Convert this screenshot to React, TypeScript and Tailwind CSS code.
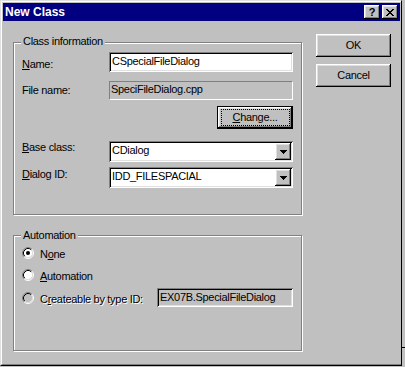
import React from "react";

const FONT = { fontFamily: '"Liberation Sans", Arial, sans-serif' };

function U({ children }: { children: React.ReactNode }) {
  return <span className="underline decoration-1 underline-offset-[1px]">{children}</span>;
}

function Label({ children, className = "" }: { children: React.ReactNode; className?: string }) {
  return (
    <div className={"text-[11px] leading-[13px] tracking-[-0.3px] text-black whitespace-nowrap " + className}>
      {children}
    </div>
  );
}

function Raised({ className = "", children }: { className?: string; children?: React.ReactNode }) {
  return (
    <div
      className={
        "bg-[#c0c0c0] shadow-[inset_-1px_-1px_0_#000,inset_1px_1px_0_#fff,inset_-2px_-2px_0_#808080,inset_2px_2px_0_#dfdfdf] " +
        className
      }
    >
      {children}
    </div>
  );
}

function Arrow() {
  return (
    <svg width="7" height="4" viewBox="0 0 7 4" shapeRendering="crispEdges">
      <rect x="0" y="0" width="7" height="1" fill="#000" />
      <rect x="1" y="1" width="5" height="1" fill="#000" />
      <rect x="2" y="2" width="3" height="1" fill="#000" />
      <rect x="3" y="3" width="1" height="1" fill="#000" />
    </svg>
  );
}

function CloseGlyph() {
  const rows = ["11000011", "01100110", "00111100", "00011000", "00111100", "01100110", "11000011"];
  return (
    <svg width="8" height="7" viewBox="0 0 8 7" shapeRendering="crispEdges">
      {rows.map((r, y) =>
        r.split("").map((c, x) => (c === "1" ? <rect key={x + "-" + y} x={x} y={y} width="1" height="1" fill="#000" /> : null))
      )}
    </svg>
  );
}

function Combo({ text }: { text: string }) {
  return (
    <div className="w-[184px] h-[21px] bg-white flex shadow-[inset_1px_1px_0_#808080,inset_-1px_-1px_0_#fff,inset_2px_2px_0_#000,inset_-2px_-2px_0_#dfdfdf]">
      <Label className="pl-[3px] pt-[3px]">{text}</Label>
      <Raised className="ml-auto mt-[2px] mr-[2px] w-[16px] h-[17px] flex items-center justify-center">
        <Arrow />
      </Raised>
    </div>
  );
}

function Radio({ checked = false, disabled = false }: { checked?: boolean; disabled?: boolean }) {
  return (
    <svg width="12" height="12" viewBox="0 0 12 12" className="shrink-0">
      <circle cx="6" cy="6" r="4.5" fill={disabled ? "#c0c0c0" : "#fff"} />
      <path d="M 2.11 9.89 A 5.5 5.5 0 0 1 9.89 2.11" fill="none" stroke="#808080" strokeWidth="1" />
      <path d="M 9.89 2.11 A 5.5 5.5 0 0 1 2.11 9.89" fill="none" stroke="#fff" strokeWidth="1" />
      <path d="M 2.82 9.18 A 4.5 4.5 0 0 1 9.18 2.82" fill="none" stroke="#000" strokeWidth="1" />
      <path d="M 9.18 2.82 A 4.5 4.5 0 0 1 2.82 9.18" fill="none" stroke="#dfdfdf" strokeWidth="1" />
      {checked && <circle cx="6" cy="6" r="2" fill="#000" />}
    </svg>
  );
}

export default function App() {
  return (
    <div className="relative w-[405px] h-[367px] bg-[#c0c0c0] overflow-hidden" style={FONT}>
      <div className="w-[402px] h-[366px] border-t border-l border-t-[#dfdfdf] border-l-[#dfdfdf] border-r border-b border-r-black border-b-black">
        <div className="h-full border-t border-l border-t-white border-l-white border-b border-b-[#808080] pt-[1px] pl-[1px] pr-[1px] flex flex-col">
          {/* Title bar */}
          <div className="h-[18px] bg-[#000080] flex items-start pt-[2px] pl-[2px]">
            <div className="text-white font-bold text-[12px] leading-[14px] whitespace-nowrap">New Class</div>
            <div className="ml-auto mr-[2px] flex gap-[2px]">
              <Raised className="w-[16px] h-[14px] flex justify-center">
                <span className="text-black font-bold text-[11px] leading-[14px]">?</span>
              </Raised>
              <Raised className="w-[16px] h-[14px] flex items-start pl-[4px] pt-[4px]">
                <CloseGlyph />
              </Raised>
            </div>
          </div>

          {/* Body */}
          <div className="flex pl-[10px]">
            <div className="mt-[21px] flex flex-col">
              {/* Class information group */}
              <div className="relative w-[289px] h-[173px] border border-[#808080] shadow-[inset_1px_1px_0_#fff,1px_1px_0_#fff] pl-[8px] pt-[9px] flex flex-col">
                <Label className="absolute left-[7px] -top-[8px] px-[2px] bg-[#c0c0c0]">Class information</Label>

                <div className="flex h-[20px]">
                  <Label className="w-[87px] mt-[6px]">
                    <U>N</U>ame:
                  </Label>
                  <div className="w-[184px] h-[20px] bg-white shadow-[inset_1px_1px_0_#808080,inset_-1px_-1px_0_#fff,inset_2px_2px_0_#000,inset_-2px_-2px_0_#dfdfdf] pl-[3px] pt-[3px]">
                    <Label>CSpecialFileDialog</Label>
                  </div>
                </div>

                <div className="flex h-[19px] mt-[9px]">
                  <Label className="w-[87px] mt-[3px]">File name:</Label>
                  <div className="w-[184px] h-[19px] bg-[#c0c0c0] border-t border-l border-t-[#808080] border-l-[#808080] border-b border-r border-b-white border-r-white pl-[1px] pt-[1px]">
                    <Label>SpeciFileDialog.cpp</Label>
                  </div>
                </div>

                <div className="flex justify-end w-[271px] mt-[6px]">
                  <div className="w-[76px] h-[23px] border border-black">
                    <Raised className="relative w-full h-full flex items-center justify-center">
                      <div className="absolute left-[3px] top-[2px] right-[2px] bottom-[2px] border border-dotted border-black" />
                      <Label>
                        <U>C</U>hange...
                      </Label>
                    </Raised>
                  </div>
                </div>

                <div className="flex mt-[12px]">
                  <Label className="w-[87px] mt-[0px]">
                    <U>B</U>ase class:
                  </Label>
                  <Combo text="CDialog" />
                </div>

                <div className="flex mt-[5px]">
                  <Label className="w-[87px] mt-[1px]">
                    <U>D</U>ialog ID:
                  </Label>
                  <Combo text="IDD_FILESPACIAL" />
                </div>
              </div>

              {/* Automation group */}
              <div className="relative mt-[20px] w-[289px] h-[116px] border border-[#808080] shadow-[inset_1px_1px_0_#fff,1px_1px_0_#fff] pl-[8px] pt-[11px] flex flex-col">
                <Label className="absolute left-[7px] -top-[7px] px-[2px] bg-[#c0c0c0]">Automation</Label>

                <div className="flex items-start h-[12px]">
                  <Radio checked />
                  <Label className="ml-[6px] mt-[1px]">
                    N<U>o</U>ne
                  </Label>
                </div>

                <div className="flex items-start h-[12px] mt-[10px]">
                  <Radio />
                  <Label className="ml-[6px] mt-[1px]">
                    <U>A</U>utomation
                  </Label>
                </div>

                <div className="flex items-start mt-[7px]">
                  <div className="mt-[4px]">
                    <Radio disabled />
                  </div>
                  <Label className="ml-[6px] mt-[5px] w-[117px] text-[#808080] [text-shadow:1px_1px_0_#fff]">
                    C<U>r</U>eateable by type ID:
                  </Label>
                  <div className="w-[136px] h-[19px] bg-[#c0c0c0] shadow-[inset_1px_1px_0_#808080,inset_-1px_-1px_0_#fff,inset_2px_2px_0_#000,inset_-2px_-2px_0_#dfdfdf] pl-[3px] pt-[3px]">
                    <Label className="text-[#808080]">EX07B.SpecialFileDialog</Label>
                  </div>
                </div>
              </div>
            </div>

            {/* Buttons */}
            <div className="ml-[14px] mt-[13px] flex flex-col">
              <Raised className="w-[75px] h-[23px] flex items-center justify-center">
                <Label>OK</Label>
              </Raised>
              <Raised className="mt-[7px] w-[75px] h-[23px] flex items-center justify-center">
                <Label>Cancel</Label>
              </Raised>
            </div>
          </div>
        </div>
      </div>
      <div className="absolute left-[402px] top-[347px] w-[3px] h-[1px] bg-black" />
    </div>
  );
}
